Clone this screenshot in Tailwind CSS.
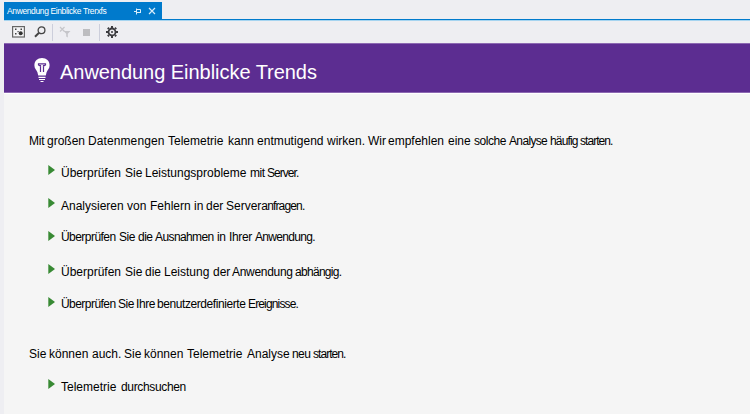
<!DOCTYPE html>
<html lang="de">
<head>
<meta charset="utf-8">
<title>Anwendung Einblicke Trends</title>
<script src="https://cdn.jsdelivr.net/npm/@tailwindcss/browser@4"></script>
</head>
<body class="w-[750px] h-[414px] overflow-hidden bg-[#eeeef2] font-['Liberation_Sans',Arial,sans-serif]">
<div class="flex flex-col h-[414px] pl-1 pt-[2px]">
  <div class="flex items-center w-[158px] h-[17px] bg-[#007acc] text-white pl-[3px]">
    <span class="text-[8.5px] leading-4 whitespace-nowrap w-[127px] tracking-[-0.38px]">Anwendung Einblicke Trerxfs</span>
    <svg class="w-[8px] h-[8px]" viewBox="0 0 8 8" fill="none" stroke="#d9edfa" stroke-width="1"><path d="M0 4.500H3M2.500 1.500V7.500M3 2.500H6.500V6M3 5.500H7"/></svg>
    <svg class="w-[8px] h-[8px] ml-[6px]" viewBox="0 0 8 8" fill="none" stroke="#d9edfa" stroke-width="1.2"><path d="M1 1L7 7M7 1L1 7"/></svg>
  </div>
  <div class="h-[2px] bg-[#007acc] border-b border-[#a6d4f0]"></div>
  <div class="flex items-center h-[22px]">
    <svg class="w-[13px] h-[12px] ml-2" viewBox="0 0 13 12"><rect x=".6" y=".6" width="11.800" height="10.400" fill="#f5f5f7" stroke="#666" stroke-width="1.200"/><path d="M3 2.500h1.500v1.500H3zM3 7h1.500v1.500H3zM5.500 5h1.200v1.200H5.500zM8.500 2.500h1.500v1.500H8.500z" fill="#444"/><circle cx="8.700" cy="7.300" r="2" fill="#333"/></svg>
    <svg class="w-[12px] h-[12px] ml-[9px]" viewBox="0 0 12 12" fill="none"><circle cx="7.500" cy="4.300" r="3.400" stroke="#444" stroke-width="1.300"/><path d="M5 6.800L1 10.800" stroke="#444" stroke-width="2"/></svg>
    <div class="w-px h-[17px] bg-[#cccedb] ml-[6px]"></div>
    <svg class="w-[12px] h-[12px] ml-[6px]" viewBox="0 0 12 12" fill="none"><path d="M1 1L5.500 5.500M5.500 1L1 5.500" stroke="#c6c6ca" stroke-width="1.200"/><path d="M4.500 5H11.500L8.800 7.800V11.500L7.200 10.500V7.800Z" fill="#c6c6ca"/></svg>
    <div class="size-[7px] ml-[12px] bg-[#bdbdc0]"></div>
    <div class="w-px h-[17px] bg-[#cccedb] ml-[9px]"></div>
    <svg class="w-[12px] h-[12px] ml-[6px]" viewBox="0 0 12 12" fill="none" stroke="#3c3c40"><circle cx="6" cy="6" r="3.500" stroke-width="1.800"/><circle cx="6" cy="6" r="1" fill="#3c3c40" stroke="none"/><path d="M6 0V2M6 10V12M0 6H2M10 6H12M1.800 1.800L3 3M9 9L10.200 10.200M10.200 1.800L9 3M3 9L1.800 10.200" stroke-width="2"/></svg>
  </div>
  <header class="flex items-start h-[50px] bg-[#5c2d91] border-y border-[#8c68b2] pt-[14px] pl-[30px] text-white">
    <svg class="w-[16px] h-[25px]" viewBox="0 0 16 25"><path d="M8 0C3.500 0 .4 3 .4 7.200C.4 10.500 2.300 11.800 3.400 14.200L4.200 17.500H11.800L12.600 14.200C13.700 11.800 15.600 10.500 15.600 7.200C15.600 3 12.500 0 8 0Z" fill="#fff"/><path d="M6.500 14V7M9.500 14V7M7 8.500L4.500 7V5.800H11.500V7L9 8.500" fill="none" stroke="#5c2d91" stroke-width="1.200"/><path d="M4.500 19.300H11.500M5 21.500H11M6.500 23.500H9.500" stroke="#fff" stroke-width="1.200"/></svg>
    <h1 class="ml-[10px] mt-[2px] text-[20px] leading-6 whitespace-nowrap tracking-[-0.04px]">Anwendung Einblicke Trends</h1>
  </header>
  <main class="flex-1 bg-[#f5f5f5] border-t border-white pl-[25px] pt-[39px] text-[12px] leading-4 text-black whitespace-nowrap">
    <p class="flex"><span class="w-[18px] tracking-[-0.2px]">Mit </span><span class="w-[41px]">großen </span><span class="w-[80px] tracking-[0.1px]">Datenmengen </span><span class="w-[60px]">Telemetrie </span><span class="w-[29px]">kann </span><span class="w-[70px] tracking-[0.05px]">entmutigend </span><span class="w-[41px]">wirken. </span><span class="w-[20px]">Wir </span><span class="w-[60px]">empfehlen </span><span class="w-[26px]">eine </span><span class="w-[35px] tracking-[-0.45px]">solche </span><span class="w-[41px] tracking-[-0.65px]">Analyse </span><span class="w-[30px] tracking-[-0.85px]">häufig </span><span class="tracking-[-0.95px]">starten.</span></p>
    <ul class="pl-[19px]">
      <li class="flex mt-4"><svg class="w-[7px] h-[10px] mr-[6px]" viewBox="0 0 7 10"><path d="M.3 0L7 5L.3 10Z" fill="#388a34"/></svg><span class="w-[64px]">Überprüfen </span><span class="w-[20px]">Sie </span><span class="w-[105px]">Leistungsprobleme </span><span class="w-[17px] tracking-[-0.5px]">mit </span><span class="tracking-[-0.95px]">Server.</span></li>
      <li class="flex mt-[17px]"><svg class="w-[7px] h-[10px] mr-[6px]" viewBox="0 0 7 10"><path d="M.3 0L7 5L.3 10Z" fill="#388a34"/></svg><span class="w-[66px]">Analysieren </span><span class="w-[23px]">von </span><span class="w-[44px]">Fehlern </span><span class="w-[12px]">in </span><span class="w-[20px]">der </span><span>Server<span class="tracking-[-0.85px]">anfragen.</span></span></li>
      <li class="flex mt-[15px]"><svg class="w-[7px] h-[10px] mt-[2px] mr-[6px]" viewBox="0 0 7 10"><path d="M.3 0L7 5L.3 10Z" fill="#388a34"/></svg><span class="w-[58px] tracking-[-0.55px]">Überprüfen </span><span class="w-[19px] tracking-[-0.4px]">Sie </span><span class="w-[17px] tracking-[-0.5px]">die </span><span class="w-[62px] tracking-[-0.6px]">Ausnahmen </span><span class="w-[12px] tracking-[-0.4px]">in </span><span class="w-[26px] tracking-[-0.35px]">Ihrer </span><span class="tracking-[-0.67px]">Anwendung.</span></li>
      <li class="flex mt-[19px]"><svg class="w-[7px] h-[10px] mr-[6px]" viewBox="0 0 7 10"><path d="M.3 0L7 5L.3 10Z" fill="#388a34"/></svg><span class="w-[64px]">Überprüfen </span><span class="w-[20px]">Sie </span><span class="w-[19px]">die </span><span class="w-[49px]">Leistung </span><span class="w-[19px]">der </span><span class="w-[63px] tracking-[-0.3px]">Anwendung </span><span class="tracking-[-0.7px]">abhängig.</span></li>
      <li class="flex mt-4"><svg class="w-[7px] h-[10px] mt-px mr-[6px]" viewBox="0 0 7 10"><path d="M.3 0L7 5L.3 10Z" fill="#388a34"/></svg><span class="w-[57px] tracking-[-0.55px]">Überprüfen </span><span class="w-[18px] tracking-[-0.4px]">Sie </span><span class="w-[21px] tracking-[-0.4px]">Ihre </span><span class="w-[91px] tracking-[-0.42px]">benutzerdefinierte </span><span class="tracking-[-0.85px]">Ereignisse.</span></li>
    </ul>
    <p class="flex mt-[34px]"><span class="w-[20px]">Sie </span><span class="w-[43px]">können </span><span class="w-[32px]">auch. </span><span class="w-[20px]">Sie </span><span class="w-[43px]">können </span><span class="w-[60px]">Telemetrie </span><span class="w-[45px]">Analyse </span><span class="w-[21px] tracking-[-0.6px]">neu </span><span class="tracking-[-0.95px]">starten.</span></p>
    <ul class="pl-[19px]">
      <li class="flex mt-[17px]"><svg class="w-[7px] h-[10px] mr-[6px]" viewBox="0 0 7 10"><path d="M.3 0L7 5L.3 10Z" fill="#388a34"/></svg><span class="w-[60px]">Telemetrie </span><span class="tracking-[-0.35px]">durchsuchen</span></li>
    </ul>
  </main>
</div>
</body>
</html>
